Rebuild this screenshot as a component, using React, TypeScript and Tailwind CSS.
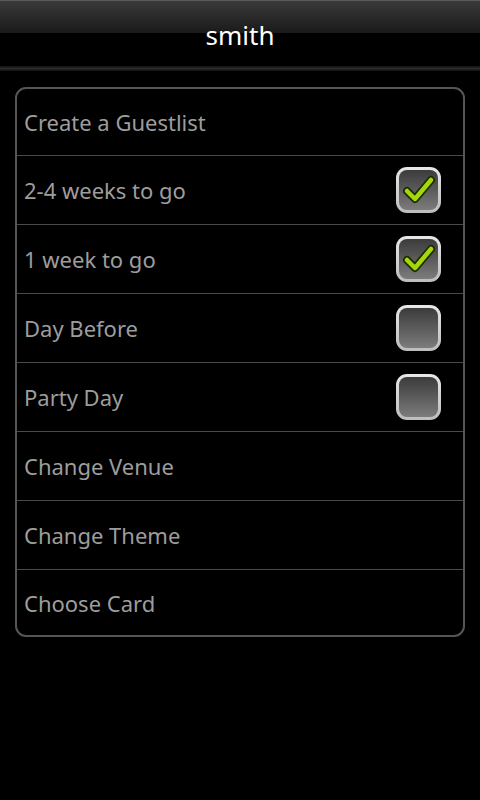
import React from "react";

const rows: { label: string; check?: boolean }[] = [
  { label: "Create a Guestlist" },
  { label: "2-4 weeks to go", check: true },
  { label: "1 week to go", check: true },
  { label: "Day Before", check: false },
  { label: "Party Day", check: false },
  { label: "Change Venue" },
  { label: "Change Theme" },
  { label: "Choose Card" },
];

function CheckBox({ checked }: { checked: boolean }) {
  return (
    <div className="w-[45px] h-[46px] rounded-[11px] p-[3px] bg-gradient-to-b from-[#e8e8e8] to-[#bdbdbd]">
      <div className="w-full h-full rounded-[8px] bg-gradient-to-b from-[#3c3c3c] to-[#7c7c7c] flex items-center justify-center">
        {checked && (
          <svg width="34" height="30" viewBox="0 0 34 30">
            <path
              d="M5 16 L13 24 L29 5"
              fill="none"
              stroke="#1e2a00"
              strokeWidth="8"
              strokeLinecap="round"
              strokeLinejoin="round"
            />
            <path
              d="M5 16 L13 24 L29 5"
              fill="none"
              stroke="#a3d80a"
              strokeWidth="4.5"
              strokeLinecap="round"
              strokeLinejoin="round"
            />
          </svg>
        )}
      </div>
    </div>
  );
}

export default function App() {
  return (
    <div
      className="w-[480px] h-[800px] bg-black relative overflow-hidden"
      style={{ fontFamily: '"Noto Sans", "Open Sans", "DejaVu Sans", sans-serif' }}
    >
      <div className="absolute left-0 top-0 w-full h-[33px] bg-gradient-to-b from-[#3a3a3a] to-[#1a1a1a] border-t border-[#5a5a5a]" />
      <div className="relative h-[66px] flex items-center justify-center pt-[4px]">
        <span className="text-white text-[26px] leading-none">smith</span>
      </div>
      <div className="h-[5px] bg-gradient-to-b from-[#111] via-[#2a2a2a] to-[#111]" />
      <div className="px-[15px] pt-[16px]">
        <div className="border-2 border-[#555] rounded-[11px] overflow-hidden">
          {rows.map((r, i) => (
            <div
              key={r.label}
              className={`flex items-center justify-between pl-[7px] pr-[22px] ${
                i > 0 ? "border-t border-[#4a4a4a]" : ""
              } ${i === 0 || i === rows.length - 1 ? "h-[66px]" : "h-[69px]"}`}
            >
              <span className="text-[#9d9d9d] text-[22px] leading-none">{r.label}</span>
              {r.check !== undefined && <CheckBox checked={r.check} />}
            </div>
          ))}
        </div>
      </div>
    </div>
  );
}
